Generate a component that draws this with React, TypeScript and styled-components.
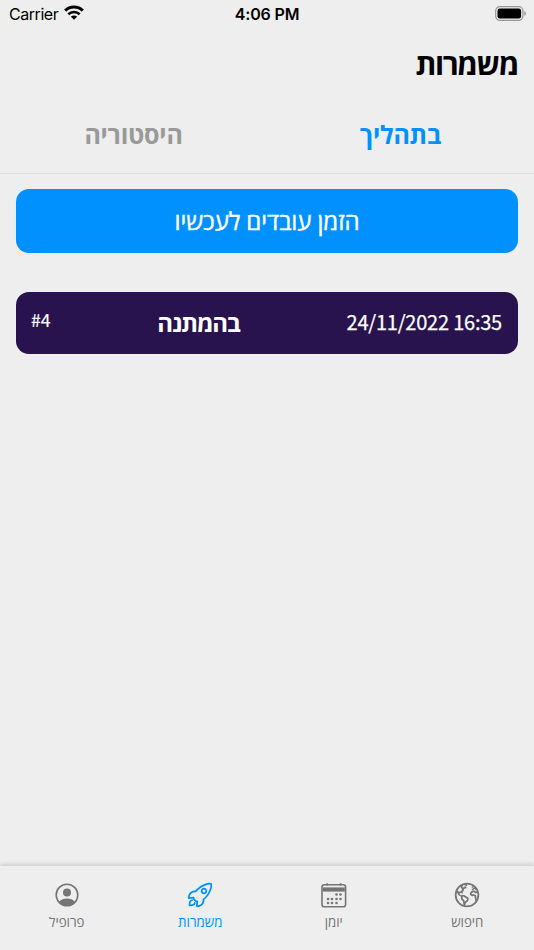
import React from 'react';
import styled, { createGlobalStyle } from 'styled-components';
import { IoEarthOutline, IoRocketOutline } from 'react-icons/io5';

const GlobalStyle = createGlobalStyle`
  * { box-sizing: border-box; }
  body { margin: 0; background: #eeeeee; }
  button { font: inherit; border: 0; padding: 0; background: none; }
`;

const Screen = styled.div`
  height: 950px;
  width: 534px;
  display: flex;
  flex-direction: column;
  overflow: hidden;
  background: #eeeeee;
  color: #000;
  font-family: 'Open Sans', 'Noto Sans', sans-serif;
`;

const StatusBar = styled.div`
  height: 28px;
  flex: none;
  display: grid;
  grid-template-columns: 1fr auto 1fr;
  align-items: center;
  padding: 0 7px 0 9px;
  font-family: Inter, sans-serif;
  font-size: 16px;
  line-height: 28px;
`;

const Carrier = styled.div`
  display: flex;
  align-items: center;
  gap: 6px;
  letter-spacing: -0.45px;
  svg { margin-top: -3px; }
`;

const Clock = styled.div`
  font-weight: 600;
  letter-spacing: -0.15px;
  margin-right: 2px;
`;

const Battery = styled.svg`
  justify-self: end;
  margin-top: -2px;
`;

const Title = styled.h1`
  margin: 0;
  height: 72px;
  flex: none;
  padding: 0 16px;
  line-height: 72px;
  font-size: 30px;
  font-weight: 700;
  letter-spacing: -1.4px;
`;

const Tabs = styled.div`
  height: 74px;
  flex: none;
  display: grid;
  grid-template-columns: 1fr 1fr;
  border-bottom: 1px solid #e0e0e0;
`;

const Tab = styled.button<{ $active?: boolean }>`
  color: ${(p) => (p.$active ? '#0091ff' : '#999999')};
  font-size: 25px;
  font-weight: 700;
  line-height: 66px;
  padding-bottom: 6px;
  letter-spacing: -0.2px;
`;

const Content = styled.main`
  flex: 1;
  display: flex;
  flex-direction: column;
  gap: 39px;
  padding: 15px 16px;
`;

const OrderButton = styled.button`
  height: 64px;
  border-radius: 13px;
  background: #0091ff;
  color: #fff;
  font-size: 24px;
  letter-spacing: -0.1px;
  -webkit-text-stroke: 0.4px currentColor;
  line-height: 64px;
`;

const ShiftCard = styled.article`
  height: 62px;
  display: flex;
  align-items: center;
  justify-content: space-between;
  padding: 0 16px;
  border-radius: 13px;
  background: #28134e;
  color: #fff;
`;

const ShiftDate = styled.time`
  font-family: 'Noto Sans CJK SC', sans-serif;
  font-size: 20px;
  letter-spacing: -0.22px;
  -webkit-text-stroke: 0.25px currentColor;
  padding-bottom: 3px;
`;

const ShiftStatus = styled.strong`
  font-size: 24px;
  letter-spacing: -1.1px;
  padding-bottom: 2px;
`;

const ShiftNumber = styled.span`
  font-family: 'Noto Sans CJK SC', sans-serif;
  font-size: 17.5px;
  -webkit-text-stroke: 0.2px currentColor;
  padding-bottom: 8px;
  margin-left: -1px;
`;

const BottomNav = styled.nav`
  height: 84px;
  flex: none;
  display: grid;
  grid-template-columns: repeat(4, 1fr);
  background: #eeeeee;
  box-shadow: 0 -1px 5px rgba(0, 0, 0, 0.18);
`;

const NavItem = styled.button<{ $active?: boolean }>`
  display: flex;
  flex-direction: column;
  align-items: center;
  padding-top: 15px;
  color: ${(p) => (p.$active ? '#0091ff' : '#757575')};
  font-size: 13.3px;
  line-height: 18px;
  svg { display: block; flex: none; margin-bottom: 4px; }
`;

const calendarDots = [
  [16.5, 13.5], [20.5, 13.5],
  [8, 18], [12, 18], [16.5, 18], [20.5, 18],
  [8, 22], [12, 22], [16.5, 22],
];

const CalendarIcon = () => (
  <svg width="28" height="28" viewBox="0 0 28 28">
    <rect x="2" y="3.8" width="23.6" height="22" rx="2.3" fill="none" stroke="currentColor" strokeWidth="1.6" />
    <path d="M2.8 6.4h22v4.2h-22z" fill="currentColor" />
    <path d="M7.2 2.3v2.2M20.6 2.3v2.2" stroke="currentColor" strokeWidth="1.7" />
    {calendarDots.map(([x, y]) => (
      <circle key={`${x}-${y}`} cx={x} cy={y} r="1.3" fill="currentColor" />
    ))}
  </svg>
);

const ProfileIcon = () => (
  <svg width="28" height="28" viewBox="0 0 28 28">
    <circle cx="14" cy="14" r="10.8" fill="none" stroke="currentColor" strokeWidth="1.6" />
    <circle cx="14" cy="11.6" r="4" fill="currentColor" />
    <path d="M6.2 20.8C8 18.5 10.8 17.5 14 17.5s6 1 7.8 3.3A10.8 10.8 0 0 1 14 24.8a10.8 10.8 0 0 1-7.8-4Z" fill="currentColor" />
  </svg>
);

export default function App() {
  return (
    <Screen dir="rtl" lang="he">
      <GlobalStyle />
      <StatusBar dir="ltr">
        <Carrier>
          Carrier
          <svg width="20" height="15" viewBox="0 0 20 15" fill="none" stroke="#000" strokeWidth="3">
            <path d="M1.2 5.6C6 .9 14 .9 18.8 5.6" />
            <path d="M4.3 9.2C7.5 6.2 12.5 6.2 15.7 9.2" strokeWidth="2.6" />
            <path d="M10 14.8 6.8 11.7C8.6 10 11.4 10 13.2 11.7Z" fill="#000" stroke="none" />
          </svg>
        </Carrier>
        <Clock>4:06 PM</Clock>
        <Battery width="32" height="15" viewBox="0 0 32 15">
          <rect x=".7" y=".7" width="27.2" height="13.6" rx="4" fill="none" stroke="#969696" strokeWidth="1.2" />
          <rect x="2.5" y="2.5" width="23.6" height="10" rx="2.3" />
          <path d="M29.3 5.2v4.6c1-.4 1.7-1.2 1.7-2.3s-.7-1.9-1.7-2.3Z" fill="#969696" />
        </Battery>
      </StatusBar>
      <Title>משמרות</Title>
      <Tabs>
        <Tab $active>בתהליך</Tab>
        <Tab>היסטוריה</Tab>
      </Tabs>
      <Content>
        <OrderButton>הזמן עובדים לעכשיו</OrderButton>
        <ShiftCard>
          <ShiftDate dir="ltr">24/11/2022 16:35</ShiftDate>
          <ShiftStatus>בהמתנה</ShiftStatus>
          <ShiftNumber dir="ltr">#4</ShiftNumber>
        </ShiftCard>
      </Content>
      <BottomNav>
        <NavItem><IoEarthOutline size={28} />חיפוש</NavItem>
        <NavItem><CalendarIcon />יומן</NavItem>
        <NavItem $active><IoRocketOutline size={28} />משמרות</NavItem>
        <NavItem><ProfileIcon />פרופיל</NavItem>
      </BottomNav>
    </Screen>
  );
}
